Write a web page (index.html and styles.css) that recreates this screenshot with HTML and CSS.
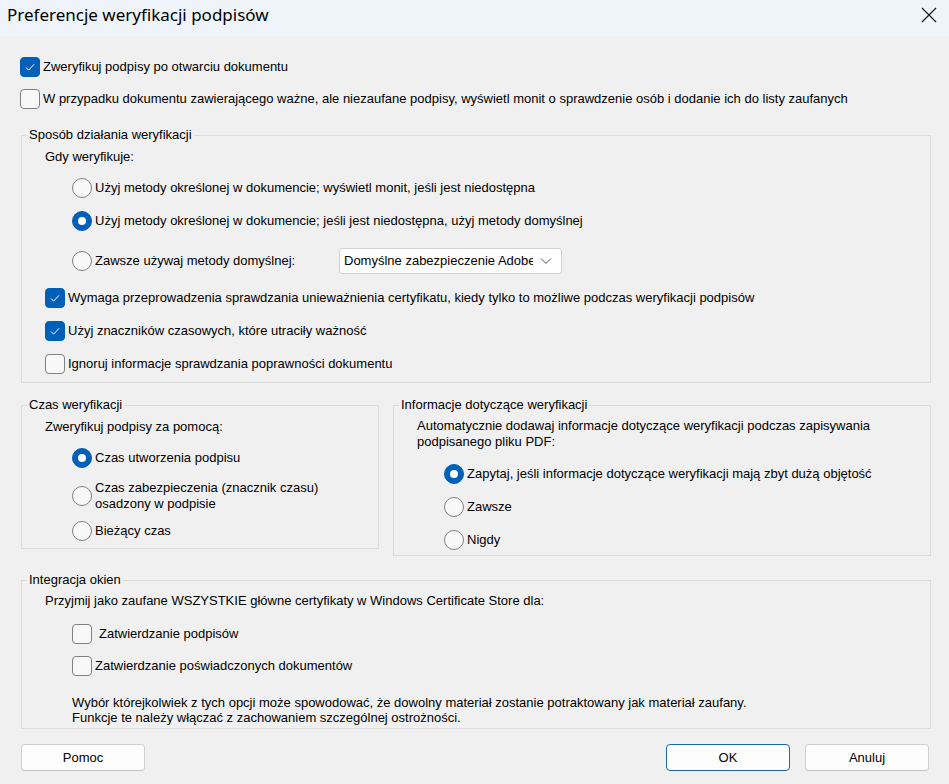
FILE: index.html
```html
<!DOCTYPE html>
<html lang="pl">
<head>
<meta charset="utf-8">
<title>Preferencje weryfikacji podpisów</title>
<link rel="stylesheet" href="styles.css">
</head>
<body>
<div class="window">
  <div class="titlebar">
    <span class="title">Preferencje weryfikacji podpisów</span>
    <svg class="close" width="16" height="16" viewBox="0 0 16 16"><path d="M1 1 L15 15 M15 1 L1 15" stroke="#1a1a1a" stroke-width="1.2" fill="none"/></svg>
  </div>
  <div class="content">
    <div class="row r-top1"><span class="cb on"><svg viewBox="0 0 20 20"><path d="M5.5 10.5 L8.5 13.5 L14.5 7" stroke="#fff" stroke-width="1.1" fill="none"/></svg></span><span class="lbl">Zweryfikuj podpisy po otwarciu dokumentu</span></div>
    <div class="row r-top2"><span class="cb"></span><span class="lbl">W przypadku dokumentu zawierającego ważne, ale niezaufane podpisy, wyświetl monit o sprawdzenie osób i dodanie ich do listy zaufanych</span></div>

    <fieldset class="group g1">
      <legend>Sposób działania weryfikacji</legend>
      <div class="text t-g1">Gdy weryfikuje:</div>
      <div class="row indent r-g1a"><span class="rb"></span><span class="lbl">Użyj metody określonej w dokumencie; wyświetl monit, jeśli jest niedostępna</span></div>
      <div class="row indent r-g1b"><span class="rb on"></span><span class="lbl">Użyj metody określonej w dokumencie; jeśli jest niedostępna, użyj metody domyślnej</span></div>
      <div class="row indent r-g1c"><span class="rb"></span><span class="lbl lbl-fixed">Zawsze używaj metody domyślnej:</span>
        <div class="select"><span class="select-text">Domyślne zabezpieczenie Adobe</span><svg class="chev" width="12" height="8" viewBox="0 0 12 8"><path d="M1 1.5 L6 6.5 L11 1.5" stroke="#555" stroke-width="1" fill="none"/></svg></div>
      </div>
      <div class="row r-g1d"><span class="cb on"><svg viewBox="0 0 20 20"><path d="M5.5 10.5 L8.5 13.5 L14.5 7" stroke="#fff" stroke-width="1.1" fill="none"/></svg></span><span class="lbl">Wymaga przeprowadzenia sprawdzania unieważnienia certyfikatu, kiedy tylko to możliwe podczas weryfikacji podpisów</span></div>
      <div class="row r-g1e"><span class="cb on"><svg viewBox="0 0 20 20"><path d="M5.5 10.5 L8.5 13.5 L14.5 7" stroke="#fff" stroke-width="1.1" fill="none"/></svg></span><span class="lbl">Użyj znaczników czasowych, które utraciły ważność</span></div>
      <div class="row r-g1f"><span class="cb"></span><span class="lbl">Ignoruj informacje sprawdzania poprawności dokumentu</span></div>
    </fieldset>

    <div class="pair">
      <fieldset class="group g2">
        <legend>Czas weryfikacji</legend>
        <div class="text t-g2">Zweryfikuj podpisy za pomocą:</div>
        <div class="row indent r-g2a"><span class="rb on"></span><span class="lbl">Czas utworzenia podpisu</span></div>
        <div class="row indent tall r-g2b"><span class="rb"></span><span class="lbl">Czas zabezpieczenia (znacznik czasu)<br>osadzony w podpisie</span></div>
        <div class="row indent r-g2c"><span class="rb"></span><span class="lbl">Bieżący czas</span></div>
      </fieldset>
      <fieldset class="group g3">
        <legend>Informacje dotyczące weryfikacji</legend>
        <div class="text t-g3">Automatycznie dodawaj informacje dotyczące weryfikacji podczas zapisywania<br>podpisanego pliku PDF:</div>
        <div class="row indent r-g3a"><span class="rb on"></span><span class="lbl">Zapytaj, jeśli informacje dotyczące weryfikacji mają zbyt dużą objętość</span></div>
        <div class="row indent r-g3b"><span class="rb"></span><span class="lbl">Zawsze</span></div>
        <div class="row indent r-g3c"><span class="rb"></span><span class="lbl">Nigdy</span></div>
      </fieldset>
    </div>

    <fieldset class="group g4">
      <legend>Integracja okien</legend>
      <div class="text t-g4">Przyjmij jako zaufane WSZYSTKIE główne certyfikaty w Windows Certificate Store dla:</div>
      <div class="row indent r-g4a"><span class="cb"></span><span class="lbl lbl-wide">Zatwierdzanie podpisów</span></div>
      <div class="row indent r-g4b"><span class="cb"></span><span class="lbl">Zatwierdzanie poświadczonych dokumentów</span></div>
      <div class="note">Wybór którejkolwiek z tych opcji może spowodować, że dowolny materiał zostanie potraktowany jak materiał zaufany.<br>Funkcje te należy włączać z zachowaniem szczególnej ostrożności.</div>
    </fieldset>

    <div class="buttons">
      <button class="btn">Pomoc</button>
      <span class="spacer"></span>
      <button class="btn default">OK</button>
      <button class="btn">Anuluj</button>
    </div>
  </div>
</div>
</body>
</html>
```

FILE: styles.css
```css
html, body {
  margin: 0;
  padding: 0;
  background: #f0f0f0;
}
.window {
  width: 949px;
  height: 784px;
  overflow: hidden;
  font-family: "Liberation Sans", Arial, sans-serif;
  font-size: 13px;
  line-height: 16px;
  color: #000;
}
.titlebar {
  height: 36px;
  background: #eef4f9;
  display: flex;
  align-items: center;
  padding-left: 7px;
  padding-right: 12px;
  box-sizing: border-box;
}
.title {
  font-family: "Noto Sans", "Open Sans", sans-serif;
  font-size: 17px;
  color: #000;
  flex: 1;
  margin-top: -6px;
}
.close {
  margin-top: -6px;
  margin-right: 0;
}
.content {
  padding-left: 20px;
  padding-right: 18px;
}
.row {
  display: flex;
  align-items: center;
  height: 20px;
}
.cb {
  width: 20px;
  height: 20px;
  box-sizing: border-box;
  border: 1px solid #808080;
  border-radius: 4px;
  background: #f8f8f8;
  flex: none;
  display: block;
}
.cb.on {
  background: #005fb8;
  border-color: #005fb8;
}
.cb svg {
  width: 18px;
  height: 18px;
  display: block;
}
.rb {
  width: 20px;
  height: 20px;
  box-sizing: border-box;
  border: 1px solid #808080;
  border-radius: 50%;
  background: #f8f8f8;
  flex: none;
  position: relative;
}
.rb.on {
  background: #005fb8;
  border-color: #005fb8;
}
.rb.on::after {
  content: "";
  position: absolute;
  left: 5px;
  top: 5px;
  width: 8px;
  height: 8px;
  border-radius: 50%;
  background: #fff;
}
.lbl {
  margin-left: 3px;
  white-space: nowrap;
}
.lbl-wide {
  margin-left: 7px;
}
.lbl-fixed {
  width: 244px;
}
.r-top1 { margin-top: 21px; }
.r-top2 { margin-top: 12px; }

.group {
  margin: 0 0 0 1px;
  padding: 0 0 0 23px;
  border: 1px solid #dcdcdc;
  min-width: 0;
}
.group legend {
  padding: 0 2px;
  margin-left: -18px;
  line-height: 16px;
  height: 16px;
}
.g1 {
  margin-top: 18px;
  width: 910px;
  box-sizing: border-box;
  padding-bottom: 8px;
}
.indent { margin-left: 27px; }
.text { white-space: nowrap; }
.t-g1 { margin-top: 6px; }
.r-g1a { margin-top: 13px; }
.r-g1b { margin-top: 13px; }
.r-g1c { margin-top: 17px; height: 26px; }
.r-g1d { margin-top: 14px; }
.r-g1e { margin-top: 13px; }
.r-g1f { margin-top: 13px; }

.select {
  width: 223px;
  height: 26px;
  box-sizing: border-box;
  background: #fff;
  border: 1px solid #d2d2d2;
  border-radius: 3px;
  display: flex;
  align-items: center;
  padding-left: 4px;
  overflow: hidden;
}
.select-text {
  width: 189px;
  overflow: hidden;
  white-space: nowrap;
}
.chev {
  margin-left: 7px;
}

.pair {
  display: flex;
  gap: 14px;
  margin-top: 14px;
  margin-left: 1px;
  align-items: flex-start;
}
.pair .group { margin-left: 0; box-sizing: border-box; }
.g2 { width: 358px; padding-bottom: 7px; }
.g3 { width: 538px; padding-bottom: 5px; }
.t-g2 { margin-top: 6px; }
.r-g2a { margin-top: 13px; }
.r-g2b { margin-top: 12px; height: 32px; }
.r-g2c { margin-top: 9px; }
.t-g3 { margin-top: 5px; }
.r-g3a { margin-top: 14px; }
.r-g3b { margin-top: 13px; }
.r-g3c { margin-top: 13px; }

.g4 {
  margin-top: 16px;
  width: 910px;
  box-sizing: border-box;
  padding-bottom: 3px;
}
.t-g4 { margin-top: 5px; }
.r-g4a { margin-top: 15px; }
.r-g4b { margin-top: 12px; }
.note {
  margin-top: 19px;
  margin-left: 27px;
  line-height: 15px;
  white-space: nowrap;
}

.buttons {
  display: flex;
  gap: 15px;
  margin-top: 15px;
  margin-left: 1px;
  width: 908px;
}
.spacer { flex: 1; }
.btn {
  width: 124px;
  height: 27px;
  box-sizing: border-box;
  background: #fdfdfd;
  border: 1px solid #d0d0d0;
  border-bottom-color: #c2c2c2;
  border-radius: 4px;
  font-family: "Liberation Sans", Arial, sans-serif;
  font-size: 13px;
  color: #000;
  padding: 0;
}
.btn.default {
  border-color: #1f66b1;
}
```
